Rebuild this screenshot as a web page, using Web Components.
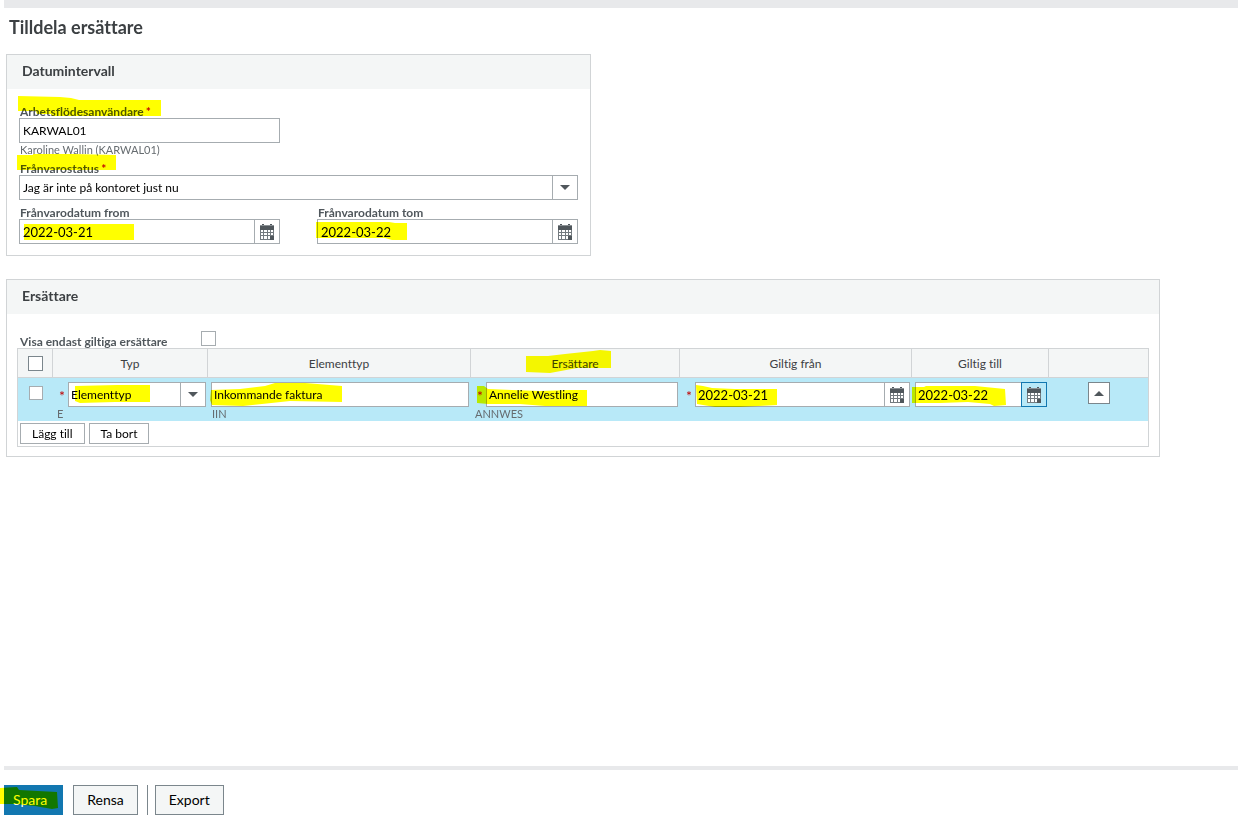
<!DOCTYPE html>
<html lang="sv">
<head>
<meta charset="utf-8">
<title>Tilldela ersättare</title>
<style>
  body {
    margin: 0;
    background: #fff;
    font: 12px/14px Lato, "Open Sans", sans-serif;
    font-variant-ligatures: none;
    color: #3c4043;
  }
</style>
</head>
<body>
<app-page heading="Tilldela ersättare">
  <panel-box heading="Datumintervall" class="narrow">
    <date-form></date-form>
  </panel-box>
  <panel-box heading="Ersättare">
    <substitute-table></substitute-table>
  </panel-box>

  <action-button slot="actions" label="Spara" primary>
    <marker-stroke points="-4,3 13,2 15,5 53,7 54,23 48,24 31,21 11,19 -4,19"></marker-stroke>
  </action-button>
  <action-button slot="actions" label="Rensa"></action-button>
  <action-button slot="actions" label="Export" divided></action-button>
</app-page>

<script>
(() => {
  const CALENDAR = `
    <svg width="14" height="16" viewBox="0 0 14 16" aria-hidden="true">
      <path fill="#50575c" d="M2 0h2v1H2zM10 0h2v1h-2zM0 2h14v4H0z"/>
      <path fill="#8b9195" d="M0 1h14v1H0z"/>
      <path fill="#737a7f" d="M0 6h14v10H0z"/>
      <path fill="#fff" d="M1 6h2v2H1zM4 6h3v2H4zM8 6h2v2H8zM11 6h2v2h-2zM1 9h2v2H1zM4 9h3v2H4zM8 9h2v2H8zM11 9h2v2h-2zM1 12h2v3H1zM4 12h3v3H4zM8 12h2v3H8z"/>
      <path fill="#50575c" d="M10 12h4v4h-4z"/>
    </svg>
  `;

  class MarkerStroke extends HTMLElement {
    constructor() {
      super();
      this.attachShadow({ mode: 'open' });
      this.shadowRoot.innerHTML = `
        <style>
          :host {
            position: absolute;
            top: 0;
            left: 0;
            mix-blend-mode: multiply;
            pointer-events: none;
          }
          svg { display: block; overflow: visible; }
        </style>
        <svg width="1" height="1" aria-hidden="true">
          <polygon fill="#ff0" points="${this.getAttribute('points')}"/>
        </svg>
      `;
    }
  }

  class AppPage extends HTMLElement {
    constructor() {
      super();
      this.attachShadow({ mode: 'open' });
      this.shadowRoot.innerHTML = `
        <style>
          :host {
            display: flex;
            flex-direction: column;
            min-height: 100vh;
          }
          header {
            height: 8px;
            margin-left: 4px;
            background: #e8e9eb;
          }
          main {
            flex: 1;
            display: flex;
            flex-direction: column;
            gap: 23px;
            padding: 0 78px 20px 6px;
          }
          h1 {
            margin: 9px 0 -7px 3px;
            font-size: 18px;
            line-height: 21px;
            font-weight: bold;
          }
          footer {
            display: flex;
            margin-left: 4px;
            padding: 15px 0 6px;
            border-top: 4px solid #e8e9eb;
          }
        </style>
        <header></header>
        <main>
          <h1>${this.getAttribute('heading')}</h1>
          <slot></slot>
        </main>
        <footer><slot name="actions"></slot></footer>
      `;
    }
  }

  class PanelBox extends HTMLElement {
    constructor() {
      super();
      this.attachShadow({ mode: 'open' });
      this.shadowRoot.innerHTML = `
        <style>
          :host {
            display: block;
            box-sizing: border-box;
            border: 1px solid #d1d4d6;
          }
          :host(.narrow) { max-width: 585px; }
          h2 {
            margin: 0;
            padding: 0 15px 2px;
            font-size: 14px;
            line-height: 32px;
            font-weight: bold;
            background: #f4f6f6;
          }
        </style>
        <h2>${this.getAttribute('heading')}</h2>
        <slot></slot>
      `;
    }
  }

  class FormField extends HTMLElement {
    get kind() {
      return this.getAttribute('kind') || 'text';
    }

    get compact() {
      return this.hasAttribute('compact');
    }

    constructor() {
      super();
      this.attachShadow({ mode: 'open' });

      const label = this.getAttribute('label');
      const hint = this.getAttribute('hint');
      const star = this.hasAttribute('required') ? '<span class="star">*</span>' : '';

      this.shadowRoot.innerHTML = `
        <style>
          *, *::after, *::before { box-sizing: border-box; }
          :host {
            display: block;
            position: relative;
            --line: #a6acb0;
          }
          label {
            display: block;
            padding: 1px 0 0 1px;
            color: #50575c;
            font-size: 12px;
            line-height: 13px;
            font-weight: bold;
          }
          .star {
            color: #c00000;
            padding-left: 2px;
          }
          .control {
            display: flex;
            height: 25px;
            border: 1px solid var(--line);
            background: #fff;
            position: relative;
          }
          input, select {
            flex: 1;
            width: 100%;
            min-width: 0;
            margin: 0;
            padding: 0 3px;
            border: none;
            border-radius: 0;
            outline: none;
            background: none;
            color: #000;
            font: inherit;
            font-size: 12px;
            font-variant-ligatures: none;
            appearance: none;
          }
          .date input { font-size: 13px; }
          .select::before {
            content: '';
            width: 25px;
            border-left: 1px solid var(--line);
            position: absolute;
            top: 0;
            bottom: 0;
            right: 0;
          }
          .select::after {
            content: '';
            border: 5px solid transparent;
            border-top-color: #50575c;
            border-bottom: none;
            position: absolute;
            top: 9px;
            right: 7px;
          }
          button {
            flex: none;
            width: 25px;
            padding: 0;
            border: none;
            border-left: 1px solid var(--line);
            background: #fff;
            display: grid;
            place-items: center;
          }
          .hint {
            padding-left: 1px;
            color: #666c70;
            font-size: 11px;
            line-height: 13px;
          }
          :host([compact]) .row { display: flex; align-items: center; }
          :host([compact]) .control { flex: 1; min-width: 0; }
          :host([compact]) input, :host([compact]) select { padding: 0 2px; }
          :host([compact]) .star {
            width: 12px;
            padding: 2px 0 0;
            font-size: 14px;
            text-align: center;
          }
          :host([active]) button {
            width: 26px;
            margin: -1px;
            border: 1px solid #1277b0;
            background: #b8e9f8;
          }
        </style>
        ${this.compact ? '' : `<label for="control">${label}${star}</label>`}
        <div class="row">
          ${this.compact ? star : ''}
          <div class="control ${this.kind}">${this.control(label)}</div>
        </div>
        ${hint ? `<div class="hint">${hint}</div>` : ''}
        <slot></slot>
      `;
    }

    control(label) {
      const value = this.getAttribute('value');
      const aria = this.compact ? `aria-label="${label}"` : '';
      if (this.kind === 'select') {
        return `<select id="control" ${aria}><option>${value}</option></select>`;
      }
      const input = `<input id="control" type="text" value="${value}" autocomplete="off" ${aria}>`;
      return this.kind === 'date'
        ? `${input}<button type="button" aria-label="Välj datum">${CALENDAR}</button>`
        : input;
    }
  }

  class DateForm extends HTMLElement {
    constructor() {
      super();
      this.attachShadow({ mode: 'open' });
      this.shadowRoot.innerHTML = `
        <style>
          :host { display: block; }
          form {
            display: grid;
            grid-template-columns: 1fr 1fr;
            gap: 5px 37px;
            padding: 15px 12px 11px;
          }
          .first { grid-column: 1; }
          .wide { grid-column: 1 / -1; }
        </style>
        <form>
          <form-field class="first" label="Arbetsflödesanvändare" value="KARWAL01" hint="Karoline Wallin (KARWAL01)" required>
            <marker-stroke points="-1,-8 41,-7 52,-6 60,-4 142,-4 142,12 33,12 32,10 18,10 17,7 -1,7"></marker-stroke>
          </form-field>
          <form-field class="wide" kind="select" label="Frånvarostatus" value="Jag är inte på kontoret just nu" required>
            <marker-stroke points="-2,-6 14,-6 14,-7 55,-7 97,-6 97,9 -2,9"></marker-stroke>
          </form-field>
          <form-field kind="date" label="Frånvarodatum from" value="2022-03-21">
            <marker-stroke points="5,19 115,19 115,35 5,35"></marker-stroke>
          </form-field>
          <form-field kind="date" label="Frånvarodatum tom" value="2022-03-22">
            <marker-stroke points="-1,17 72,17 78,18 90,18 90,35 75,35 68,33 -1,33"></marker-stroke>
          </form-field>
        </form>
      `;
    }
  }

  class SubstituteTable extends HTMLElement {
    constructor() {
      super();
      this.attachShadow({ mode: 'open' });
      this.shadowRoot.innerHTML = `
        <style>
          *, *::after, *::before { box-sizing: border-box; }
          :host {
            display: block;
            padding: 17px 10px 9px;
          }
          .filter {
            display: flex;
            height: 17px;
          }
          .filter label {
            width: 184px;
            padding: 4px 0 0 3px;
            color: #50575c;
            line-height: 13px;
            font-weight: bold;
          }
          input[type="checkbox"] {
            width: 15px;
            height: 15px;
            margin: 0;
            border: 1px solid #a6acb0;
            background: #fff;
            appearance: none;
            display: block;
          }
          .grid { border: 1px solid #d1d4d6; }
          table {
            width: 100%;
            table-layout: fixed;
            border-collapse: separate;
            border-spacing: 0;
          }
          th {
            height: 29px;
            padding: 1px 0 0;
            border: solid #d1d4d6;
            border-width: 0 1px 1px 0;
            background: #f4f6f6;
            font-weight: normal;
            position: relative;
          }
          th:last-child { border-right: none; }
          th input[type="checkbox"] {
            margin: 0 auto;
            border-color: #7b868c;
          }
          td {
            height: 43px;
            padding: 4px 2px 0 3px;
            background: #b8e9f8;
            vertical-align: top;
            position: relative;
          }
          td > input[type="checkbox"] {
            width: 14px;
            height: 14px;
            margin: 4px auto 0;
          }
          .collapse {
            width: 22px;
            height: 22px;
            padding: 0;
            margin: 0 auto;
            border: 1px solid #7b868c;
            background: #fff;
            display: grid;
            place-items: center;
          }
          .collapse::before {
            content: '';
            border: 5px solid transparent;
            border-bottom-color: #50575c;
            border-top: none;
          }
          .tools {
            display: flex;
            gap: 4px;
            padding: 2px;
          }
          .tools button {
            height: 21px;
            padding: 0 11px;
            border: 1px solid #a6acb0;
            background: #fff;
            color: #000;
            font: inherit;
            font-variant-ligatures: none;
          }
        </style>
        <div class="filter">
          <label for="validOnly">Visa endast giltiga ersättare</label>
          <input type="checkbox" id="validOnly">
        </div>
        <div class="grid">
          <table>
            <colgroup>
              <col style="width: 35px"><col style="width: 155px"><col style="width: 263px">
              <col style="width: 209px"><col style="width: 232px"><col style="width: 137px">
              <col style="width: 99px">
            </colgroup>
            <thead>
              <tr>
                <th><input type="checkbox" aria-label="Markera alla"></th>
                <th>Typ</th>
                <th>Elementtyp</th>
                <th>Ersättare
                  <marker-stroke points="55,7 77,7 94,5 122,2 129,1 140,2 140,19 106,19 79,24 55,23"></marker-stroke>
                </th>
                <th>Giltig från</th>
                <th>Giltig till</th>
                <th></th>
              </tr>
            </thead>
            <tbody>
              <tr>
                <td><input type="checkbox" aria-label="Markera rad"></td>
                <td>
                  <form-field compact required kind="select" label="Typ" value="Elementtyp" hint="E"></form-field>
                  <marker-stroke points="22,8 64,7 97,7 97,24 62,24 27,25 22,23"></marker-stroke>
                </td>
                <td>
                  <form-field compact label="Elementtyp" value="Inkommande faktura" hint="IIN"></form-field>
                  <marker-stroke points="3,12 32,11 57,8 67,5 97,5 134,8 134,24 82,23 54,26 35,28 4,27 2,22"></marker-stroke>
                </td>
                <td>
                  <form-field compact required label="Ersättare" value="Annelie Westling" hint="ANNWES"></form-field>
                  <marker-stroke points="6,8 13,8 17,11 41,12 69,13 99,12 116,12 116,28 74,28 49,26 17,26 6,25"></marker-stroke>
                </td>
                <td>
                  <form-field compact required kind="date" label="Giltig från" value="2022-03-21"></form-field>
                  <marker-stroke points="16,7 23,8 32,10 55,11 97,11 97,27 60,29 35,29 17,26"></marker-stroke>
                </td>
                <td>
                  <form-field compact active kind="date" label="Giltig till" value="2022-03-22"></form-field>
                  <marker-stroke points="0,9 12,9 14,8 63,8 93,11 94,27 82,28 78,26 56,24 28,25 0,25"></marker-stroke>
                </td>
                <td><button type="button" class="collapse" aria-label="Dölj rad"></button></td>
              </tr>
            </tbody>
          </table>
          <div class="tools">
            <button type="button">Lägg till</button>
            <button type="button">Ta bort</button>
          </div>
        </div>
      `;
    }
  }

  class ActionButton extends HTMLElement {
    constructor() {
      super();
      this.attachShadow({ mode: 'open' });
      this.shadowRoot.innerHTML = `
        <style>
          :host {
            display: block;
            margin-right: 10px;
            position: relative;
          }
          :host([divided]) {
            margin-left: -1px;
            padding-left: 7px;
            border-left: 1px solid #7b868c;
          }
          button {
            height: 30px;
            padding: 0 13px;
            border: 1px solid #7b868c;
            background: #f4f6f6;
            color: #000;
            font: inherit;
            font-size: 14px;
            display: block;
          }
          :host([primary]) button {
            padding: 0 15px 0 8px;
            border-color: #1277b0;
            background: #1277b0;
            color: #fff;
          }
        </style>
        <button type="button">${this.getAttribute('label')}</button>
        <slot></slot>
      `;
    }
  }

  window.customElements.define('marker-stroke', MarkerStroke);
  window.customElements.define('form-field', FormField);
  window.customElements.define('date-form', DateForm);
  window.customElements.define('substitute-table', SubstituteTable);
  window.customElements.define('action-button', ActionButton);
  window.customElements.define('panel-box', PanelBox);
  window.customElements.define('app-page', AppPage);
})();
</script>
</body>
</html>
